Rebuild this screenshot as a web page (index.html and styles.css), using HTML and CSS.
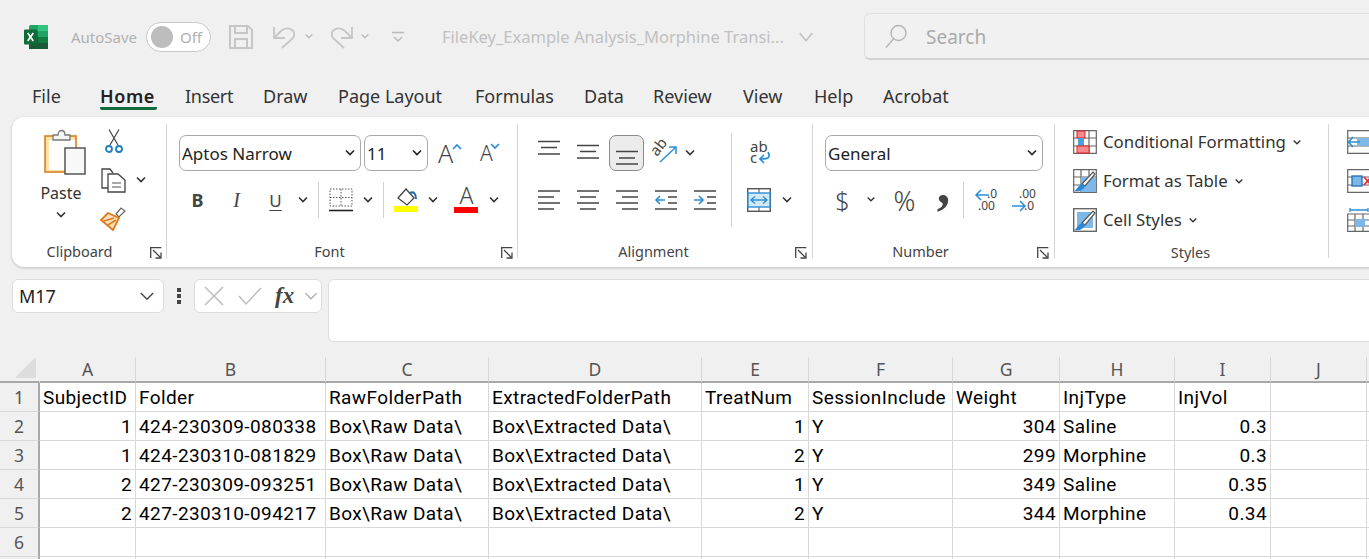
FILE: index.html
```html
<!DOCTYPE html>
<html lang="en">
<head>
<meta charset="utf-8">
<title>FileKey_Example Analysis_Morphine Transition</title>
<link rel="stylesheet" href="styles.css">
</head>
<body>
<svg class="sprite" aria-hidden="true">
  <symbol id="chev" viewBox="0 0 12 8"><path d="M2 1.5 6 5.5 10 1.5" fill="none" stroke="currentColor" stroke-width="1.6"/></symbol>
  <symbol id="launch" viewBox="0 0 12 12"><path d="M.7 11V.7H11.3M3 3 10 10M11 5.500V11H5.500" fill="none" stroke="#444" stroke-width="1.300"/></symbol>
  <symbol id="brush" viewBox="0 0 24 24"><path d="M22 5 12 17 9 15 20 3Z" fill="#fff" stroke="#555" stroke-width="1.200"/><path d="M9 15 12 17C11 21 6 23 1 22 4 21 5 16 9 15Z" fill="#2b88d8"/></symbol>
</svg>

<header class="titlebar">
  <svg class="logo" viewBox="0 0 24 24" width="24" height="24" role="img" aria-label="Excel">
    <rect x="5" width="19" height="24" rx="1.500" fill="#21a366"/>
    <rect x="14" width="10" height="6" fill="#33c481"/>
    <rect x="5" y="6" width="9" height="6" fill="#107c41"/>
    <rect x="14" y="12" width="10" height="6" fill="#107c41"/>
    <rect x="5" y="12" width="9" height="12" fill="#185c37"/>
    <rect x="14" y="18" width="10" height="6" fill="#185c37"/>
    <rect y="4.500" width="13" height="15" rx="1" fill="#0f6b38"/>
    <path d="M3.700 8 9.300 16M9.300 8 3.700 16" stroke="#fff" stroke-width="1.700"/>
  </svg>
  <span class="autosave">AutoSave</span>
  <span class="toggle"><i class="knob"></i><span>Off</span></span>
  <svg class="qat qat-save" viewBox="0 0 24 24" width="24" height="24"><path d="M1 1H19L23 5V23H1ZM6 1V8H18V1M6 23V14H18V23" fill="none" stroke="#c6c6c6" stroke-width="2"/></svg>
  <svg class="qat qat-undo" viewBox="0 0 24 24" width="24" height="24"><path d="M2 2V13H13M2 13 9 6C16 0 26 6 21 13L10 23" fill="none" stroke="#c6c6c6" stroke-width="1.800"/></svg>
  <svg class="qat-chev" width="10" height="7"><use href="#chev"/></svg>
  <svg class="qat qat-redo" viewBox="0 0 24 24" width="24" height="24"><path d="M22 2V13H11M22 13 15 6C8 0-2 6 3 13L14 23" fill="none" stroke="#c6c6c6" stroke-width="1.800"/></svg>
  <svg class="qat-chev second" width="10" height="7"><use href="#chev"/></svg>
  <svg class="qat qat-more" viewBox="0 0 12 12" width="12" height="12"><path d="M0 1.500H12M2 6 6 10 10 6" fill="none" stroke="#bbb" stroke-width="1.500"/></svg>
  <span class="filename">FileKey_Example Analysis_Morphine Transi...</span>
  <svg class="file-chev" width="16" height="10" viewBox="0 0 12 8"><path d="M1 1 6 7 11 1" fill="none" stroke="#bbb" stroke-width="1.100"/></svg>
  <div class="search">
    <svg viewBox="0 0 24 24" width="24" height="24"><circle cx="14.500" cy="9" r="7.500" fill="none" stroke="#b5b5b5" stroke-width="1.400"/><path d="M9.500 15 2 23.500" stroke="#b5b5b5" stroke-width="1.400"/></svg>
    <span>Search</span>
  </div>
</header>

<nav class="tabs">
  <a class="tab tab-file">File</a>
  <a class="tab tab-home active">Home</a>
  <a class="tab tab-insert">Insert</a>
  <a class="tab tab-draw">Draw</a>
  <a class="tab tab-layout">Page Layout</a>
  <a class="tab tab-formulas">Formulas</a>
  <a class="tab tab-data">Data</a>
  <a class="tab tab-review">Review</a>
  <a class="tab tab-view">View</a>
  <a class="tab tab-help">Help</a>
  <a class="tab tab-acrobat">Acrobat</a>
</nav>

<section class="ribbon">
  <div class="group g-clip">
    <div class="body clip-body">
      <div class="paste">
        <svg viewBox="0 0 42 46" width="42" height="46">
          <rect x="1" y="7" width="31" height="36" fill="#fde3a7" stroke="#d9801f" stroke-width="1.600"/>
          <rect x="5" y="11" width="26" height="30" fill="#fff"/>
          <path d="M9 11V6H14C14 0 21 0 21 6H26V11Z" fill="#f4f4f4" stroke="#777" stroke-width="1.300"/>
          <rect x="21" y="19" width="20" height="26" fill="#f8f8f8" stroke="#555" stroke-width="1.500"/>
        </svg>
        <span class="paste-label">Paste</span>
        <svg class="paste-chev" width="12" height="8"><use href="#chev"/></svg>
      </div>
      <div class="clip-tools">
        <svg class="cut" viewBox="0 0 18 24" width="18" height="24">
          <path d="M4 .5 13 16M14 .5 5 16" stroke="#444" stroke-width="1.200" fill="none"/>
          <circle cx="4" cy="20" r="3" fill="none" stroke="#1f7fc4" stroke-width="1.800"/>
          <circle cx="14" cy="20" r="3" fill="none" stroke="#1f7fc4" stroke-width="1.800"/>
        </svg>
        <div class="copy-row">
          <svg viewBox="0 0 24 24" width="24" height="24">
            <path d="M8 20H1V1H9L12 5" fill="none" stroke="#444" stroke-width="1.300"/>
            <path d="M7 6H17L24 12V24H7Z" fill="#fff" stroke="#444" stroke-width="1.300"/>
            <path d="M11 15H20M11 19H20" stroke="#555" stroke-width="1.200"/>
          </svg>
          <svg class="chev" width="12" height="8"><use href="#chev"/></svg>
        </div>
        <svg class="painter" viewBox="0 0 24 24" width="24" height="24">
          <path d="M15 8 20 2 24 5 18 11Z" fill="#fff" stroke="#666" stroke-width="1.200"/>
          <path d="M7 7 18 12 12 24 0 14Z" fill="#fbe1bd" stroke="#df7a1a" stroke-width="1.800"/>
          <path d="M3 15 13 12M7 19 15 14" stroke="#df7a1a" stroke-width="1.600"/>
        </svg>
      </div>
    </div>
    <div class="label">Clipboard<svg class="launcher" width="12" height="12"><use href="#launch"/></svg></div>
  </div>

  <div class="group g-font">
    <div class="body stack">
      <div class="row">
        <div class="select sel-font"><span>Aptos Narrow</span><svg width="12" height="8"><use href="#chev"/></svg></div>
        <div class="select sel-size"><span>11</span><svg width="12" height="8"><use href="#chev"/></svg></div>
        <span class="ic grow"><span class="big-a">A</span><svg class="caret" width="10" height="7"><path d="M1 6 5 2 9 6" fill="none" stroke="#2b8fd8" stroke-width="1.700"/></svg></span>
        <span class="ic shrink"><span class="small-a">A</span><svg class="caret" width="10" height="7"><path d="M1 1 5 5 9 1" fill="none" stroke="#2b8fd8" stroke-width="1.700"/></svg></span>
      </div>
      <div class="row">
        <span class="ic glyph bold">B</span>
        <span class="ic glyph italic">I</span>
        <span class="ic glyph under">U</span>
        <svg class="chev-cell" width="16" height="8"><use href="#chev" x="2" width="12" height="8"/></svg>
        <i class="sep"></i>
        <span class="ic">
          <svg viewBox="0 0 24 24" width="24" height="24"><path d="M1 1H23V18H1ZM12 1V18M1 9.500H23" fill="none" stroke="#555" stroke-width="1" stroke-dasharray="1.500 1.500"/><path d="M0 22.500H24" stroke="#222" stroke-width="1.600"/></svg>
        </span>
        <svg class="chev-cell" width="16" height="8"><use href="#chev" x="2" width="12" height="8"/></svg>
        <i class="sep"></i>
        <span class="ic">
          <svg viewBox="0 0 24 24" width="24" height="24"><path d="M12 1 20 10 13 17 4 10Z" fill="#fff" stroke="#444" stroke-width="1.300"/><path d="M16 5C20 3 22 6 22 11" fill="none" stroke="#1f6fb5" stroke-width="2"/><rect y="18" width="24" height="6" fill="#ff0"/></svg>
        </span>
        <svg class="chev-cell" width="16" height="8"><use href="#chev" x="2" width="12" height="8"/></svg>
        <i class="gap6"></i>
        <span class="ic color-a"><span>A</span><i class="bar-red"></i></span>
        <svg class="chev-cell" width="16" height="8"><use href="#chev" x="2" width="12" height="8"/></svg>
      </div>
    </div>
    <div class="label">Font<svg class="launcher" width="12" height="12"><use href="#launch"/></svg></div>
  </div>

  <div class="group g-align">
    <div class="body align-body">
      <div class="stack align-left">
        <div class="row">
          <span class="ic"><svg viewBox="0 0 24 24" width="24" height="24"><path d="M1 .500H23M4 6.500H20M1 13H23" stroke="#444" stroke-width="1.400"/></svg></span>
          <span class="ic"><svg viewBox="0 0 24 24" width="24" height="24"><path d="M1 4.500H23M4 10.500H20M1 17H23" stroke="#444" stroke-width="1.400"/></svg></span>
          <span class="ic active-btn"><svg viewBox="0 0 24 24" width="24" height="24"><path d="M1 10.500H23M4 17H20M1 23H23" stroke="#444" stroke-width="1.400"/></svg></span>
          <span class="ic narrow"><svg class="orient" viewBox="0 0 26 26" width="26" height="26"><text class="svgtxt" transform="translate(6 17) rotate(-52)" font-size="15">ab</text><path d="M9 22 25 7M18 7H25V14" fill="none" stroke="#2b8fd8" stroke-width="1.500"/></svg></span>
          <svg class="chev-cell" width="16" height="8"><use href="#chev" x="2" width="12" height="8"/></svg>
        </div>
        <div class="row">
          <span class="ic"><svg viewBox="0 0 24 24" width="24" height="24"><path d="M1 3H23M1 9H17M1 15H23M1 21H17" stroke="#444" stroke-width="1.400"/></svg></span>
          <span class="ic"><svg viewBox="0 0 24 24" width="24" height="24"><path d="M1 3H23M4 9H20M1 15H23M4 21H20" stroke="#444" stroke-width="1.400"/></svg></span>
          <span class="ic"><svg viewBox="0 0 24 24" width="24" height="24"><path d="M1 3H23M7 9H23M1 15H23M7 21H23" stroke="#444" stroke-width="1.400"/></svg></span>
          <span class="ic"><svg viewBox="0 0 24 24" width="24" height="24"><path d="M1 3H23M14 9H23M14 15H23M1 21H23" stroke="#444" stroke-width="1.400"/><path d="M11 12H2M6 8 2 12 6 16" fill="none" stroke="#2b8fd8" stroke-width="1.600"/></svg></span>
          <span class="ic"><svg viewBox="0 0 24 24" width="24" height="24"><path d="M1 3H23M14 9H23M14 15H23M1 21H23" stroke="#444" stroke-width="1.400"/><path d="M1 12H10M6 8 10 12 6 16" fill="none" stroke="#2b8fd8" stroke-width="1.600"/></svg></span>
        </div>
      </div>
      <i class="sep-tall"></i>
      <div class="stack align-right">
        <div class="row">
          <span class="ic"><svg class="shift" viewBox="0 0 24 24" width="24" height="24"><text class="svgtxt" x="1" y="11" font-size="15">ab</text><text class="svgtxt" x="1" y="22" font-size="15">c</text><path d="M19 11C22 17 19 18 11 18M15 14 11 18 15 22" fill="none" stroke="#2b8fd8" stroke-width="1.700"/></svg></span>
        </div>
        <div class="row">
          <span class="ic"><svg viewBox="0 0 24 24" width="24" height="24"><rect x=".7" y=".7" width="22.600" height="22.600" fill="#fff" stroke="#555" stroke-width="1.400"/><path d="M12 1V5M12 19V23" stroke="#555"/><rect x="1" y="5" width="22" height="14" fill="#d3e8f7" stroke="#2b8fd8" stroke-width="1.400"/><path d="M4 12H20M8 8.500 4 12 8 15.500M16 8.500 20 12 16 15.500" fill="none" stroke="#2b8fd8" stroke-width="1.400"/></svg></span>
          <svg class="chev-cell merge-chev" width="16" height="8"><use href="#chev" x="2" width="12" height="8"/></svg>
        </div>
      </div>
    </div>
    <div class="label">Alignment<svg class="launcher" width="12" height="12"><use href="#launch"/></svg></div>
  </div>

  <div class="group g-number">
    <div class="body stack">
      <div class="row">
        <div class="select sel-format"><span>General</span><svg width="12" height="8"><use href="#chev"/></svg></div>
      </div>
      <div class="row number-tools">
        <span class="ic glyph money">$</span>
        <svg class="chev-cell tiny" width="16" height="8"><use href="#chev" x="3" width="10" height="7"/></svg>
        <span class="ic glyph percent">%</span>
        <span class="ic glyph comma">,</span>
        <i class="sep"></i>
        <span class="ic"><svg viewBox="0 0 26 26" width="26" height="26"><text class="svgtxt" x="13" y="11" font-size="12">.0</text><text class="svgtxt" x="4" y="23" font-size="12">.00</text><path d="M15 8H2M7 3 2 8 7 13" fill="none" stroke="#2b8fd8" stroke-width="1.500"/></svg></span>
        <span class="ic tight"><svg viewBox="0 0 26 26" width="26" height="26"><text class="svgtxt" x="8" y="11" font-size="12">.00</text><text class="svgtxt" x="13" y="23" font-size="12">.0</text><path d="M1 19H14M9 14 14 19 9 24" fill="none" stroke="#2b8fd8" stroke-width="1.500"/></svg></span>
      </div>
    </div>
    <div class="label">Number<svg class="launcher" width="12" height="12"><use href="#launch"/></svg></div>
  </div>

  <div class="group g-styles">
    <div class="body styles-body">
      <div class="style-item">
        <svg viewBox="0 0 24 24" width="24" height="24"><path d="M.7.7H23.300V23.300H.7ZM0 8H24M0 16H24M8 0V24M16 0V24" fill="none" stroke="#666" stroke-width="1.200"/><rect x="4" y="1" width="8" height="7" fill="#f58b8b" stroke="#e02020"/><rect x="5" y="8" width="6" height="8" fill="#4a9fdc"/><rect x="4" y="16" width="12" height="7" fill="#f58b8b" stroke="#e02020"/></svg>
        <span>Conditional Formatting</span><svg width="10" height="7"><use href="#chev"/></svg>
      </div>
      <div class="style-item">
        <svg viewBox="0 0 24 24" width="24" height="24"><path d="M.7.7H23.300V23.300H.7ZM0 8H24M0 16H24M8 0V24M16 0V24" fill="none" stroke="#666" stroke-width="1.200"/><path d="M8 8H23V23H8Z" fill="#7db8e8"/><use href="#brush"/></svg>
        <span>Format as Table</span><svg width="10" height="7"><use href="#chev"/></svg>
      </div>
      <div class="style-item">
        <svg viewBox="0 0 24 24" width="24" height="24"><rect x=".7" y=".7" width="22.600" height="22.600" fill="none" stroke="#666" stroke-width="1.400"/><rect x="4" y="4" width="16" height="16" fill="#7db8e8"/><use href="#brush"/></svg>
        <span>Cell Styles</span><svg width="10" height="7"><use href="#chev"/></svg>
      </div>
    </div>
    <div class="label label-styles">Styles</div>
  </div>

  <div class="group g-cells">
    <div class="body cells-body">
      <svg viewBox="0 0 24 24" width="24" height="24"><path d="M.7.7H23.300V23.300H.7ZM0 8H24M0 16H24" fill="none" stroke="#666" stroke-width="1.200"/><rect x="10" y="8" width="14" height="8" fill="#7db8e8"/><path d="M13 12H2M6 7 1.500 12 6 17" fill="none" stroke="#2b8fd8" stroke-width="1.600"/></svg>
      <svg viewBox="0 0 24 24" width="24" height="24"><path d="M.7.7H23.300V23.300H.7ZM0 8H24M0 16H24" fill="none" stroke="#666" stroke-width="1.200"/><rect x="5" y="7" width="10" height="10" fill="#7db8e8" stroke="#1f6fb5" stroke-width="1.300"/><path d="M17 8 24 16M24 8 17 16" stroke="#e83030" stroke-width="1.800"/></svg>
      <svg viewBox="0 0 24 24" width="24" height="24"><path d="M.7 6H23.300V23.300H.7ZM0 12H24M0 18H24M8 6V24M16 6V24" fill="none" stroke="#666" stroke-width="1.200"/><rect x="8" y="11" width="10" height="8" fill="#7db8e8"/><path d="M3 2H21M3 0V4M21 0V4" stroke="#2b8fd8" stroke-width="1.300"/></svg>
    </div>
  </div>
</section>

<section class="formula">
  <div class="namebox"><span>M17</span><svg width="18" height="11" viewBox="0 0 12 8"><path d="M1.500 1.500 6 6 10.500 1.500" fill="none" stroke="#444" stroke-width="1"/></svg></div>
  <div class="dots"><i></i><i></i><i></i></div>
  <div class="fxbox">
    <svg viewBox="0 0 20 20" width="20" height="20"><path d="M1 1 19 19M19 1 1 19" stroke="#bdbdbd" stroke-width="1.500"/></svg>
    <svg viewBox="0 0 24 20" width="24" height="20"><path d="M1 10 8 18 23 2" fill="none" stroke="#bdbdbd" stroke-width="1.500"/></svg>
    <span class="fx">fx</span>
    <svg width="14" height="9" viewBox="0 0 12 8"><path d="M1 1 6 6 11 1" fill="none" stroke="#aaa" stroke-width="1.100"/></svg>
  </div>
  <div class="fxinput"></div>
</section>

<table class="sheet">
  <colgroup>
    <col class="c-h"><col class="c-a"><col class="c-b"><col class="c-c"><col class="c-d"><col class="c-e"><col class="c-f"><col class="c-g"><col class="c-h2"><col class="c-i"><col class="c-j"><col class="c-k">
  </colgroup>
  <thead>
    <tr><th class="corner"><i></i></th><th>A</th><th>B</th><th>C</th><th>D</th><th>E</th><th>F</th><th>G</th><th>H</th><th>I</th><th>J</th><th></th></tr>
  </thead>
  <tbody>
    <tr><th>1</th><td>SubjectID</td><td>Folder</td><td>RawFolderPath</td><td>ExtractedFolderPath</td><td>TreatNum</td><td>SessionInclude</td><td>Weight</td><td>InjType</td><td>InjVol</td><td></td><td></td></tr>
    <tr><th>2</th><td class="n">1</td><td>424-230309-080338</td><td>Box\Raw Data\</td><td>Box\Extracted Data\</td><td class="n">1</td><td>Y</td><td class="n">304</td><td>Saline</td><td class="n">0.3</td><td></td><td></td></tr>
    <tr><th>3</th><td class="n">1</td><td>424-230310-081829</td><td>Box\Raw Data\</td><td>Box\Extracted Data\</td><td class="n">2</td><td>Y</td><td class="n">299</td><td>Morphine</td><td class="n">0.3</td><td></td><td></td></tr>
    <tr><th>4</th><td class="n">2</td><td>427-230309-093251</td><td>Box\Raw Data\</td><td>Box\Extracted Data\</td><td class="n">1</td><td>Y</td><td class="n">349</td><td>Saline</td><td class="n">0.35</td><td></td><td></td></tr>
    <tr><th>5</th><td class="n">2</td><td>427-230310-094217</td><td>Box\Raw Data\</td><td>Box\Extracted Data\</td><td class="n">2</td><td>Y</td><td class="n">344</td><td>Morphine</td><td class="n">0.34</td><td></td><td></td></tr>
    <tr><th>6</th><td></td><td></td><td></td><td></td><td></td><td></td><td></td><td></td><td></td><td></td><td></td></tr>
    <tr><th></th><td></td><td></td><td></td><td></td><td></td><td></td><td></td><td></td><td></td><td></td><td></td></tr>
  </tbody>
</table>
</body>
</html>
```

FILE: styles.css
```css
* { box-sizing: border-box; }
html, body { margin: 0; height: 559px; overflow: hidden; }
body { width: 1369px; background: #f0f0f0; font-family: "Noto Sans", "Open Sans", sans-serif; color: #333; }
i { display: block; }
svg { display: block; flex: none; overflow: visible; }
.sprite { position: absolute; width: 0; height: 0; }

/* title bar */
.titlebar { display: flex; align-items: center; height: 73px; padding-left: 24px; color: #aaa; }
.titlebar > * { flex: none; }
.autosave { margin-left: 23px; font-size: 15px; width: 75px; color: #b0b0b0; }
.toggle { display: flex; align-items: center; width: 65px; height: 30px; padding-left: 4px; gap: 7px; border: 1px solid #c8c8c8; border-radius: 15px; background: #fff; font-size: 15px; color: #b0b0b0; }
.knob { width: 22px; height: 22px; border-radius: 50%; background: #bdbdbd; }
.qat-save { margin-left: 18px; }
.qat-undo { margin-left: 19px; }
.qat-redo { margin-left: 16px; }
.qat-chev { margin-left: 8px; color: #bbb; }
.qat-chev.second { margin-left: 6px; }
.qat-more { margin-left: 22px; }
.filename { margin-left: 38px; width: 350px; white-space: nowrap; font-size: 16.500px; color: #c0c0c0; }
.file-chev { margin-left: 6px; }
.search { display: flex; align-items: center; gap: 18px; width: 520px; height: 47px; margin-left: 50px; padding-left: 19px; border: 1px solid #e0e0e0; border-bottom: 2px solid #d4d4d4; border-radius: 6px; background: #f1f1f1; font-size: 19px; color: #aaa; }
.search span { padding-top: 2px; }

/* tabs */
.tabs { display: flex; height: 40px; font-size: 18px; color: #333; }
.tab { display: block; height: 37px; padding-top: 9px; line-height: 28px; white-space: nowrap; flex: none; }
.tab-file { margin-left: 32px; width: 68px; }
.tab-home { width: 57px; margin-right: 28px; font-weight: 600; letter-spacing: .6px; color: #222; border-bottom: 3px solid #0f6b3c; border-radius: 0 0 2px 2px; }
.tab-insert { width: 78px; letter-spacing: -.3px; }
.tab-draw { width: 75px; }
.tab-layout { width: 137px; }
.tab-formulas { width: 109px; }
.tab-data { width: 69px; }
.tab-review { width: 90px; }
.tab-view { width: 71px; }
.tab-help { width: 69px; }
.tab-acrobat { width: 80px; }

/* ribbon */
.ribbon { display: flex; width: 1400px; height: 150px; margin: 4px 0 0 12px; padding: 7px 0 9px; border-radius: 12px; background: #fff; box-shadow: 0 1px 3px rgba(0,0,0,.22); }
.group { position: relative; display: flex; flex-direction: column; flex: none; border-right: 1px solid #d4d4d4; }
.body { flex: 1; min-height: 0; }
.label { position: relative; height: 20px; font-size: 14.500px; line-height: 26px; text-align: center; color: #444; white-space: nowrap; }
.launcher { position: absolute; right: 5px; top: 9px; }
.g-clip { width: 155px; }
.g-font { width: 351px; padding-left: 11px; }
.g-align { width: 295px; padding-left: 11px; }
.g-number { width: 242px; padding-left: 12px; }
.g-styles { width: 274px; padding-left: 18px; }
.g-cells { flex: 1; border-right: 0; padding-left: 18px; }
.g-clip .label { padding-right: 19px; }
.g-font .label { padding-right: 36px; }
.g-align .label { padding-right: 34px; }
.g-number .label { padding-right: 38px; }
.label-styles { padding-right: 20px; line-height: 28px; }
.g-clip .launcher { right: 4px; }
.g-font .launcher { right: 4px; }
.g-number .launcher { right: 5px; }

.stack { display: flex; flex-direction: column; gap: 11px; padding-top: 11px; }
.row { display: flex; align-items: center; height: 36px; }
.ic { display: flex; align-items: center; justify-content: center; flex: none; width: 39px; height: 36px; position: relative; }
.ic.narrow { width: 36px; }
.ic.tight { margin-left: -2px; }
.chev-cell { color: #333; }
.sep { width: 1px; height: 36px; margin: 0 2px 0 7px; background: #d0d0d0; }
.gap6 { width: 6px; }

/* clipboard */
.clip-body { display: flex; padding: 5px 0 0 32px; }
.paste { display: flex; flex-direction: column; align-items: center; width: 42px; }
.paste-label { font-size: 16px; line-height: 22px; margin-top: 7px; margin-left: -8px; color: #333; }
.paste-chev { margin: 7px 8px 0 0; color: #333; }
.clip-tools { display: flex; flex-direction: column; align-items: flex-start; margin-left: 15px; }
.cut { margin: 0 0 15px 4px; }
.copy-row { display: flex; align-items: center; gap: 10px; margin-bottom: 14px; color: #333; }

/* selects */
.select { display: flex; align-items: center; justify-content: space-between; flex: none; height: 36px; padding: 0 4px 0 2px; border: 1px solid #a8a8a8; border-radius: 7px; background: #fff; font-size: 17px; color: #222; }
.sel-font { width: 182px; margin: 0 3px 0 1px; }
.sel-size { width: 64px; margin-right: 3px; }
.sel-format { width: 218px; }

/* font buttons */
.glyph { font-size: 18px; color: #444; }
.bold { font-weight: 700; font-family: "Noto Sans", sans-serif; }
.italic { font-style: italic; font-family: "Liberation Serif", serif; font-size: 20px; }
.under { text-decoration: underline; text-underline-offset: 3px; font-size: 17px; }
.big-a { font-size: 25px; font-weight: 300; color: #444; margin-left: -10px; }
.small-a { font-size: 21px; font-weight: 300; color: #444; margin-left: -6px; }
.caret { position: absolute; right: 8px; top: 8px; }
.shrink .caret { right: 9px; }
.color-a { flex-direction: column; justify-content: flex-start; font-size: 23px; line-height: 26px; color: #444; font-weight: 300; }
.bar-red { position: absolute; bottom: 5px; left: 7px; width: 24px; height: 6px; background: #f00; }

/* alignment */
.align-body { display: flex; }
.align-left { width: 202px; }
.sep-tall { width: 1px; height: 94px; margin-top: 9px; background: #d0d0d0; }
.align-right { padding-left: 7px; }
.active-btn::before { content: ""; position: absolute; inset: 0 2px; border: 1px solid #8a8a8a; border-radius: 7px; background: #ececec; }
.active-btn svg { position: relative; }
.shift { margin-left: 5px; }
.merge-chev { margin-left: 1px; }
.svgtxt { font-family: "Noto Sans", sans-serif; fill: #444; }

/* number */
.number-tools { margin-left: -2px; }
.chev-cell.tiny { margin-left: 1px; margin-right: 6px; }
.money { font-size: 25px; font-weight: 300; }
.percent { font-size: 27px; font-weight: 300; }
.comma { font-size: 54px; font-weight: 700; line-height: 20px; padding-bottom: 30px; font-family: "Liberation Serif", serif; }
.number-tools .sep { margin: 0 3px 0 0; }

/* styles */
.styles-body { display: flex; flex-direction: column; gap: 15px; padding-top: 6px; }
.style-item { display: flex; align-items: center; height: 24px; font-size: 16.800px; color: #333; white-space: nowrap; }
.style-item span { margin: -2px 6px 0; }
.style-item svg:last-child { margin-left: 0; color: #333; }
.cells-body { display: flex; flex-direction: column; gap: 15px; padding-top: 6px; }

/* formula bar */
.formula { display: flex; align-items: flex-start; margin: 12px 0 15px 12px; }
.formula > * { flex: none; }
.namebox { display: flex; align-items: center; justify-content: space-between; width: 152px; height: 34px; padding: 0 7px 0 6px; border: 1px solid #dcdcdc; border-radius: 6px; background: #fff; font-size: 18px; color: #222; }
.dots { display: flex; flex-direction: column; align-items: center; gap: 2px; width: 30px; padding-top: 9px; }
.dots i { width: 4px; height: 4px; background: #444; }
.fxbox { display: flex; align-items: center; width: 128px; height: 34px; padding-left: 9px; border: 1px solid #dcdcdc; border-radius: 6px; background: #fff; }
.fxbox svg:nth-child(2) { margin-left: 14px; }
.fx { width: 27px; margin-left: 13px; font-family: "Liberation Serif", serif; font-style: italic; font-weight: 700; font-size: 23px; line-height: 26px; color: #444; }
.fxbox svg:last-child { margin-left: 2px; }
.fxinput { width: 1100px; height: 63px; margin-left: 6px; border: 1px solid #dcdcdc; border-radius: 6px; background: #fff; }

/* sheet */
.sheet { table-layout: fixed; width: 1480px; border-collapse: separate; border-spacing: 0; font-family: Roboto, sans-serif; }
.c-h { width: 40px; } .c-a { width: 96px; } .c-b { width: 190px; } .c-c { width: 163px; } .c-d { width: 213px; }
.c-e { width: 107px; } .c-f { width: 144px; } .c-g { width: 107px; } .c-h2 { width: 115px; } .c-i { width: 96px; } .c-j { width: 96px; } .c-k { width: 113px; }
.sheet th { padding: 0; font-family: "Noto Sans", sans-serif; font-size: 17.500px; font-weight: 400; color: #555; background: #f0f0f0; border-right: 1px solid #d8d8d8; text-align: center; }
.sheet thead th { height: 25px; line-height: 24px; border-bottom: 2px solid #a8a8a8; }
.sheet tbody th { height: 29px; background: #f0f0f0; border-right: 2px solid #a8a8a8; border-bottom: 1px solid #d8d8d8; }
.sheet td { height: 29px; padding: 0 3px; background: #fff; border-right: 1px solid #d8d8d8; border-bottom: 1px solid #d8d8d8; font-size: 19px; letter-spacing: .4px; color: #000; white-space: nowrap; overflow: hidden; }
.sheet td.n { text-align: right; }
.sheet thead th.corner { position: relative; border-right-color: #f0f0f0; }
.corner i { position: absolute; right: 3px; bottom: 3px; width: 0; height: 0; border-style: solid; border-width: 0 0 21px 21px; border-color: transparent transparent #dcdcdc transparent; }
```
